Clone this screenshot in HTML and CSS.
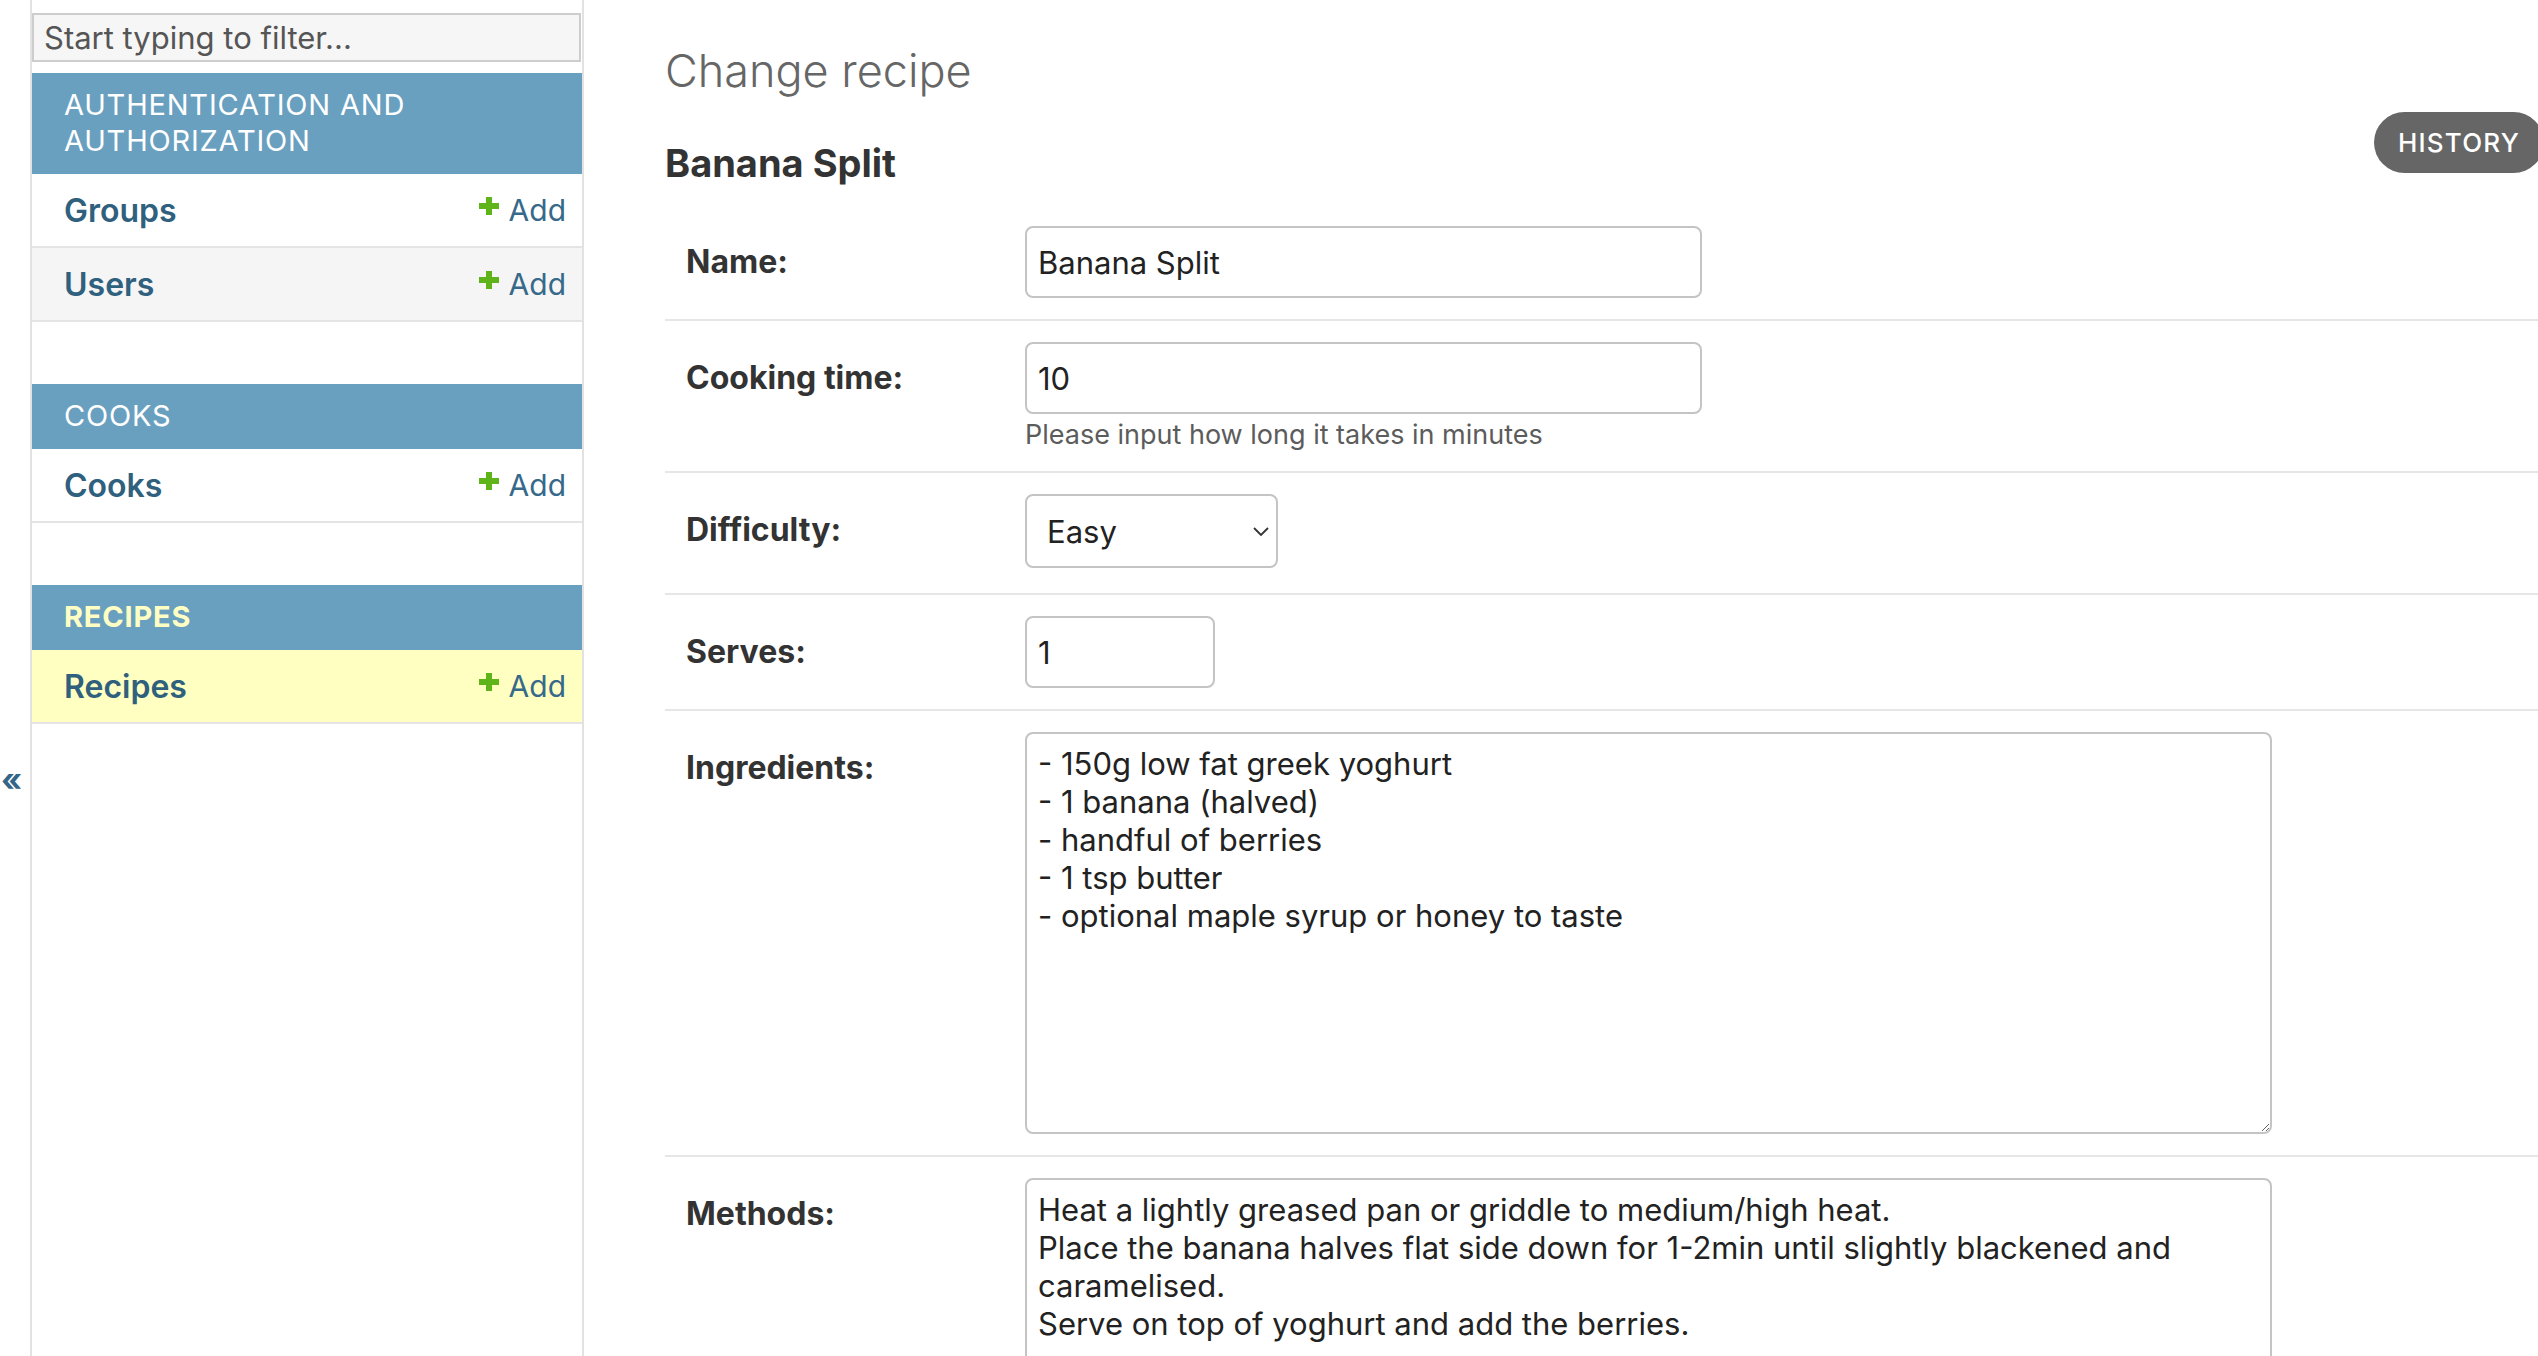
FILE: index.html
```html
<!DOCTYPE html>
<html lang="en">
<head>
<meta charset="utf-8">
<title>Change recipe | Django site admin</title>
<link rel="stylesheet" href="styles.css">
</head>
<body>
<div class="page">
  <div class="toggle"><span class="toggle-glyph">«</span></div>
  <nav class="sidebar">
    <input class="filter" type="search" placeholder="Start typing to filter...">
    <div class="module">
      <div class="caption">Authentication and Authorization</div>
      <div class="row"><a class="model">Groups</a><a class="add"><svg class="plus" viewBox="0 0 20 18"><path d="M7 0h6v6h7v6h-7v6H7v-6H0V6h7z"/></svg>Add</a></div>
      <div class="row alt"><a class="model">Users</a><a class="add"><svg class="plus" viewBox="0 0 20 18"><path d="M7 0h6v6h7v6h-7v6H7v-6H0V6h7z"/></svg>Add</a></div>
    </div>
    <div class="module">
      <div class="caption">Cooks</div>
      <div class="row"><a class="model">Cooks</a><a class="add"><svg class="plus" viewBox="0 0 20 18"><path d="M7 0h6v6h7v6h-7v6H7v-6H0V6h7z"/></svg>Add</a></div>
    </div>
    <div class="module current">
      <div class="caption">Recipes</div>
      <div class="row"><a class="model">Recipes</a><a class="add"><svg class="plus" viewBox="0 0 20 18"><path d="M7 0h6v6h7v6h-7v6H7v-6H0V6h7z"/></svg>Add</a></div>
    </div>
  </nav>
  <main class="content">
    <h1 class="title">Change recipe</h1>
    <div class="titlebar">
      <h2 class="subtitle">Banana Split</h2>
      <a class="history">History</a>
    </div>
    <div class="form">
      <div class="form-row">
        <label class="label">Name:</label>
        <div class="field"><input class="text wide" type="text" value="Banana Split"></div>
      </div>
      <div class="form-row">
        <label class="label">Cooking time:</label>
        <div class="field">
          <input class="text wide" type="text" value="10">
          <div class="help">Please input how long it takes in minutes</div>
        </div>
      </div>
      <div class="form-row">
        <label class="label">Difficulty:</label>
        <div class="field">
          <div class="select-wrap">
            <select class="select"><option>Easy</option><option>Medium</option><option>Hard</option></select>
            <svg class="chevron" viewBox="0 0 16 10"><path d="M1 1l7 7 7-7"/></svg>
          </div>
        </div>
      </div>
      <div class="form-row">
        <label class="label">Serves:</label>
        <div class="field"><input class="text narrow" type="text" value="1"></div>
      </div>
      <div class="form-row">
        <label class="label">Ingredients:</label>
        <div class="field"><textarea class="area">- 150g low fat greek yoghurt
- 1 banana (halved)
- handful of berries
- 1 tsp butter
- optional maple syrup or honey to taste</textarea></div>
      </div>
      <div class="form-row">
        <label class="label">Methods:</label>
        <div class="field"><textarea class="area">Heat a lightly greased pan or griddle to medium/high heat.
Place the banana halves flat side down for 1-2min until slightly blackened and caramelised.
Serve on top of yoghurt and add the berries.</textarea></div>
      </div>
    </div>
  </main>
</div>
</body>
</html>
```

FILE: styles.css
```css
* { box-sizing: border-box; }
html, body {
  margin: 0;
  padding: 0;
  background: #fff;
  overflow: hidden;
}
body {
  font-family: Inter, "Noto Sans", "Liberation Sans", sans-serif;
  color: #333;
}
.page {
  display: flex;
  width: 2538px;
  height: 1356px;
  overflow: hidden;
}

/* toggle column */
.toggle {
  flex: 0 0 32px;
  border-right: 2px solid #e2e2e2;
  padding-top: 760px;
}
.toggle-glyph {
  display: block;
  font-size: 32px;
  line-height: 40px;
  font-weight: 700;
  color: #336688;
  margin-left: 1px;
}

/* sidebar */
.sidebar {
  flex: 0 0 552px;
  border-right: 2px solid #e2e2e2;
  padding-top: 13px;
}
.filter {
  display: block;
  width: 549px;
  height: 49px;
  margin: 0 0 11px 0;
  border: 2px solid #cdcdcd;
  background: #f6f6f6;
  font-family: inherit;
  font-size: 31px;
  padding: 0 10px;
  color: #555;
  outline: none;
}
.filter::placeholder { color: #555; opacity: 1; }
.module {
  margin-bottom: 62px;
}
.caption {
  background: #6aa0bf;
  color: #fff;
  text-transform: uppercase;
  font-size: 29px;
  line-height: 36px;
  letter-spacing: 0.8px;
  padding: 14px 40px 15px 32px;
}
.module.current .caption {
  color: #ffffc4;
  font-weight: 700;
}
.row {
  display: flex;
  align-items: center;
  justify-content: space-between;
  height: 74px;
  padding: 0 16px 0 32px;
  border-bottom: 2px solid #e4e4e4;
  background: #fff;
}
.row.alt { background: #f5f5f5; }
.module.current .row { background: #ffffc2; }
.model {
  font-size: 32px;
  font-weight: 600;
  color: #2f607d;
}
.add {
  display: flex;
  align-items: center;
  font-size: 30px;
  color: #36698a;
}
.plus {
  width: 20px;
  height: 18px;
  fill: #5fb41a;
  margin-right: 10px;
  margin-top: -8px;
}

/* content */
.content {
  flex: 1 1 auto;
  padding: 0 0 0 81px;
  margin-right: -6px;
  min-width: 0;
}
.title {
  margin: 0;
  padding-top: 43px;
  font-size: 45px;
  line-height: 56px;
  font-weight: 300;
  color: #666;
}
.titlebar {
  display: flex;
  justify-content: space-between;
  align-items: flex-start;
}
.subtitle {
  margin: 42px 0 20px 0;
  font-size: 38px;
  line-height: 44px;
  font-weight: 700;
  color: #333;
}
.history {
  margin-top: 13px;
  height: 61px;
  padding: 0 24px;
  border-radius: 31px;
  background: #666;
  color: #fff;
  text-transform: uppercase;
  font-size: 26px;
  letter-spacing: 1.2px;
  font-weight: 500;
  display: flex;
  align-items: center;
}

.form-row {
  display: flex;
  align-items: flex-start;
  padding: 21px 21px 21px 21px;
  border-bottom: 2px solid #e6e6e6;
}
.label {
  flex: 0 0 339px;
  font-size: 32px;
  font-weight: 700;
  color: #333;
  padding-top: 18px;
  line-height: 36px;
}
.field { flex: 1 1 auto; }
.text {
  display: block;
  height: 72px;
  border: 2px solid #c4c4c4;
  border-radius: 8px;
  padding: 0 11px;
  font-family: inherit;
  font-size: 31px;
  color: #222;
  background: #fff;
  outline: none;
}
.wide { width: 677px; }
.narrow { width: 190px; }
.help {
  margin-top: 6px;
  font-size: 27px;
  line-height: 30px;
  color: #5c5c5c;
}
.select-wrap {
  position: relative;
  width: 253px;
  margin-bottom: 4px;
}
.select {
  display: block;
  width: 253px;
  height: 74px;
  border: 2px solid #c4c4c4;
  border-radius: 8px;
  padding: 0 20px;
  font-family: inherit;
  font-size: 31px;
  color: #222;
  background: #fff;
  -webkit-appearance: none;
  appearance: none;
  outline: none;
}
.chevron {
  position: absolute;
  right: 9px;
  top: 33px;
  width: 16px;
  height: 10px;
  fill: none;
  stroke: #333;
  stroke-width: 1.8;
}
.area {
  display: block;
  width: 1247px;
  height: 402px;
  border: 2px solid #c4c4c4;
  border-radius: 8px;
  padding: 11px 11px;
  font-family: inherit;
  font-size: 31px;
  line-height: 38px;
  color: #222;
  background: #fff;
  outline: none;
}
```
